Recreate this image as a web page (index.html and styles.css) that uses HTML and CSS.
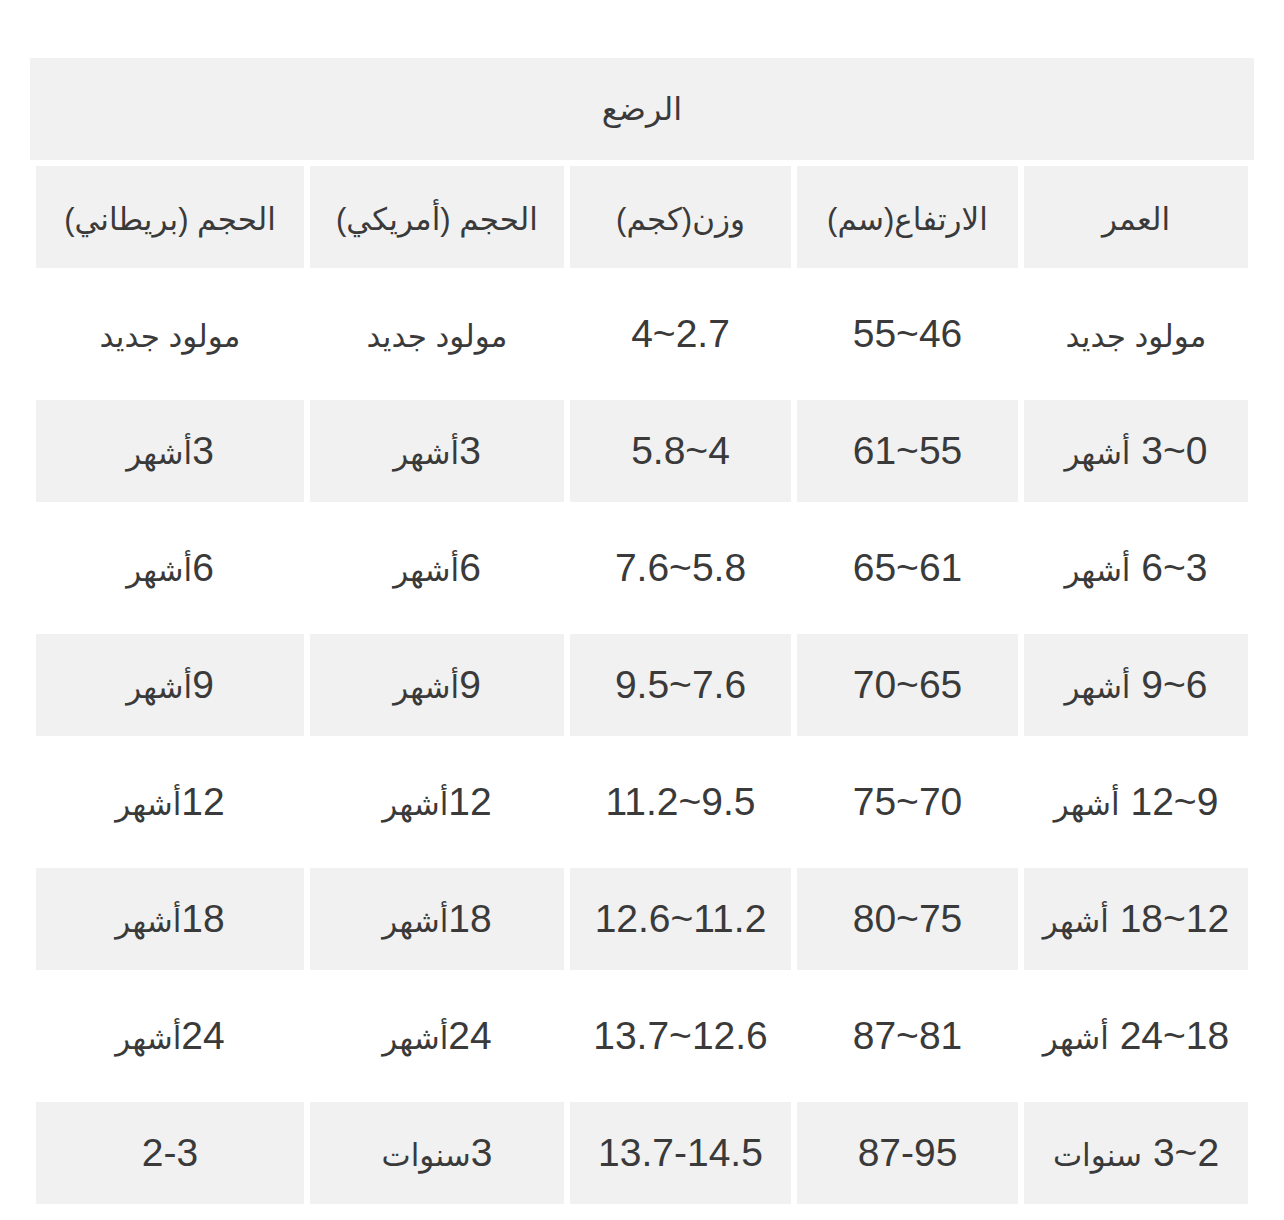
FILE: index.html
```html
<!DOCTYPE html>
<html lang="ar" dir="rtl">
<head>
<meta charset="utf-8">
<title>الرضع</title>
<link rel="stylesheet" href="styles.css">
</head>
<body>
<main class="page">
  <div class="title">الرضع</div>
  <div class="grid">
    <div class="cell shade"><span class="ar">العمر</span></div>
    <div class="cell shade"><span class="ar">الارتفاع(سم)</span></div>
    <div class="cell shade"><span class="ar">وزن(كجم)</span></div>
    <div class="cell shade"><span class="ar">الحجم (أمريكي)</span></div>
    <div class="cell shade"><span class="ar">الحجم (بريطاني)</span></div>

    <div class="cell"><span class="ar">مولود جديد</span></div>
    <div class="cell">46~55</div>
    <div class="cell">2.7~4</div>
    <div class="cell"><span class="ar">مولود جديد</span></div>
    <div class="cell"><span class="ar">مولود جديد</span></div>

    <div class="cell shade">0~3 <span class="ar">أشهر</span></div>
    <div class="cell shade">55~61</div>
    <div class="cell shade">4~5.8</div>
    <div class="cell shade">3<span class="ar">أشهر</span></div>
    <div class="cell shade">3<span class="ar">أشهر</span></div>

    <div class="cell">3~6 <span class="ar">أشهر</span></div>
    <div class="cell">61~65</div>
    <div class="cell">5.8~7.6</div>
    <div class="cell">6<span class="ar">أشهر</span></div>
    <div class="cell">6<span class="ar">أشهر</span></div>

    <div class="cell shade">6~9 <span class="ar">أشهر</span></div>
    <div class="cell shade">65~70</div>
    <div class="cell shade">7.6~9.5</div>
    <div class="cell shade">9<span class="ar">أشهر</span></div>
    <div class="cell shade">9<span class="ar">أشهر</span></div>

    <div class="cell">9~12 <span class="ar">أشهر</span></div>
    <div class="cell">70~75</div>
    <div class="cell">9.5~11.2</div>
    <div class="cell">12<span class="ar">أشهر</span></div>
    <div class="cell">12<span class="ar">أشهر</span></div>

    <div class="cell shade">12~18 <span class="ar">أشهر</span></div>
    <div class="cell shade">75~80</div>
    <div class="cell shade">11.2~12.6</div>
    <div class="cell shade">18<span class="ar">أشهر</span></div>
    <div class="cell shade">18<span class="ar">أشهر</span></div>

    <div class="cell">18~24 <span class="ar">أشهر</span></div>
    <div class="cell">81~87</div>
    <div class="cell">12.6~13.7</div>
    <div class="cell">24<span class="ar">أشهر</span></div>
    <div class="cell">24<span class="ar">أشهر</span></div>

    <div class="cell shade">2~3 <span class="ar">سنوات</span></div>
    <div class="cell shade">87-95</div>
    <div class="cell shade">13.7-14.5</div>
    <div class="cell shade">3<span class="ar">سنوات</span></div>
    <div class="cell shade">2-3</div>
  </div>
</main>
</body>
</html>
```

FILE: styles.css
```css
html, body {
  margin: 0;
  padding: 0;
  background: #ffffff;
}

body {
  font-family: "Liberation Sans", "DejaVu Sans", sans-serif;
  color: #3a3a3a;
}

.page {
  width: 1224px;
  padding: 58px 30px 0 30px;
}

.title {
  height: 102px;
  background: #f1f1f1;
  display: flex;
  align-items: center;
  justify-content: center;
  font-size: 32px;
}

.grid {
  display: grid;
  grid-template-columns: 224px 221px 221px 254px 268px;
  grid-auto-rows: 102px;
  column-gap: 6px;
  row-gap: 15px;
  margin: 6px 6px 0 6px;
}

.cell {
  font-size: 39px;
  line-height: 102px;
  text-align: center;
  white-space: nowrap;
  overflow: hidden;
}

.ar {
  font-size: 31px;
}

.shade {
  background: #f1f1f1;
}
```
